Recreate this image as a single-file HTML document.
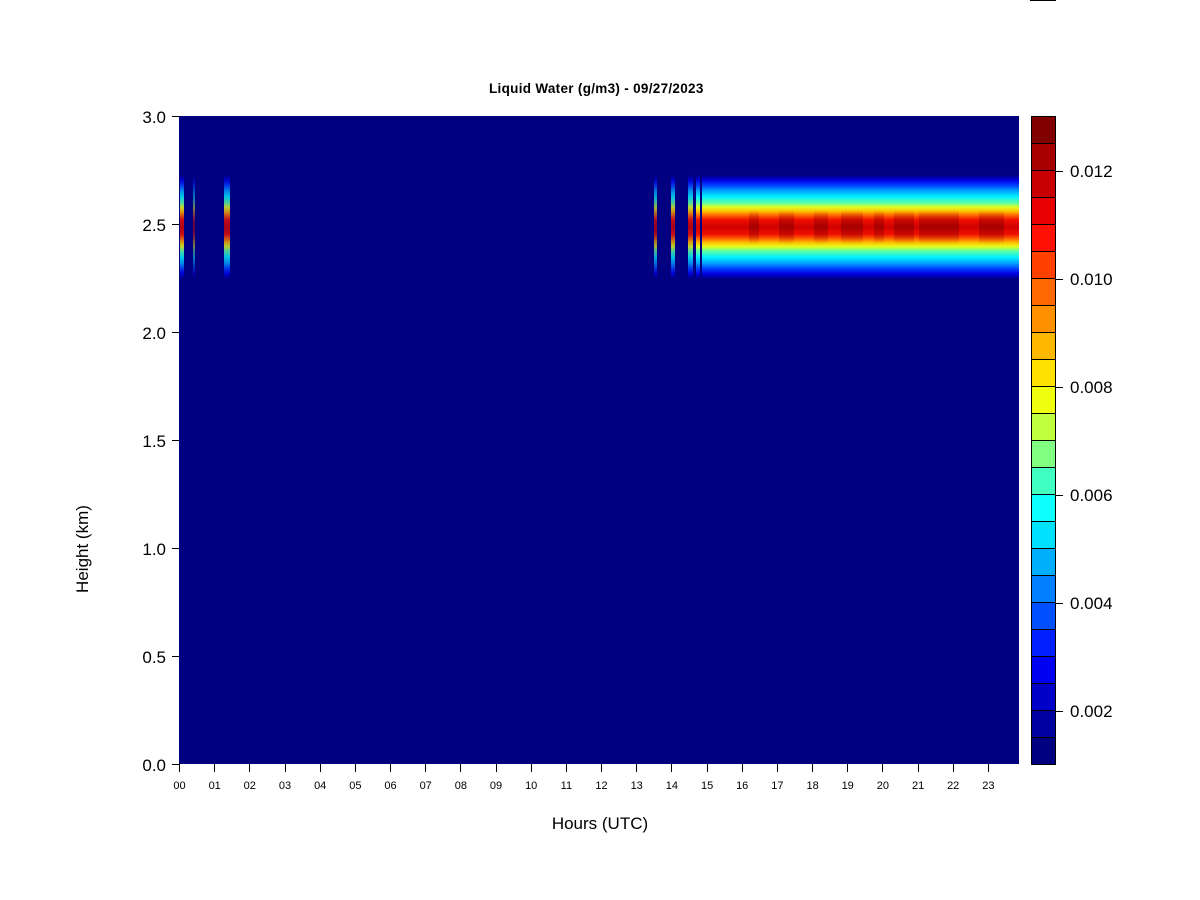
<!DOCTYPE html>
<html><head><meta charset="utf-8"><style>
*{margin:0;padding:0;box-sizing:border-box}
body{width:1200px;height:900px;background:#fff;position:relative;overflow:hidden;font-family:"Liberation Sans",Arial,sans-serif;color:#000}
.a{position:absolute}
.plot{left:179px;top:116px;width:840px;height:648px;background:#000080}
.band{position:absolute;top:59px;height:104px;background:linear-gradient(to bottom,#000080 0%,#0000e0 5%,#0040ff 10%,#00a0ff 15%,#00f0ff 21%,#60ffa0 27%,#e0ff20 31%,#ffc000 35%,#ff6000 39%,#f01000 43%,#d00000 50%,#f01000 57%,#ff6000 61%,#ffc000 65%,#e0ff20 69%,#60ffa0 73%,#00f0ff 79%,#00a0ff 85%,#0040ff 90%,#0000e0 95%,#000080 100%)}
.dk{position:absolute;top:94px;height:34px;background:linear-gradient(to bottom,rgba(160,0,0,0),rgba(150,0,0,.7) 50%,rgba(160,0,0,0))}
.yl{position:absolute;right:1034px;font-size:17px;line-height:17px}
.yt{position:absolute;left:172px;width:7px;height:1px;background:#000}
.xt{position:absolute;top:764px;width:1px;height:8px;background:#000}
.xl{position:absolute;top:780px;font-size:11px;width:30px;text-align:center;margin-left:-15px}
.cb{position:absolute;left:1031px;width:25px;height:28px;border:1px solid #000}
.ct{position:absolute;left:1055px;width:8px;height:1px;background:#000}
.cl{position:absolute;left:1070px;font-size:17px;line-height:17px}
</style></head><body>
<div class="a" style="left:1030px;top:0;width:26px;height:1px;background:#000"></div>
<div class="a" style="left:489px;top:81px;font-size:13.5px;font-weight:bold;white-space:nowrap;letter-spacing:0.3px">Liquid Water (g/m3) - 09/27/2023</div>
<div class="a plot">
  <div class="band" style="left:1px;width:4px;opacity:.85"></div>
  <div class="band" style="left:14px;width:2px;opacity:.5"></div>
  <div class="band" style="left:45px;width:6px;opacity:.8"></div>
  <div class="band" style="left:475px;width:3px;opacity:.7"></div>
  <div class="band" style="left:492px;width:4px;opacity:.8"></div>
  <div class="band" style="left:509px;width:5px;opacity:.85"></div>
  <div class="band" style="left:517px;width:4px"></div>
  <div class="band" style="left:523px;width:317px"></div>
  <div class="dk" style="left:570px;width:10px"></div>
  <div class="dk" style="left:600px;width:15px"></div>
  <div class="dk" style="left:635px;width:14px"></div>
  <div class="dk" style="left:662px;width:22px"></div>
  <div class="dk" style="left:695px;width:10px"></div>
  <div class="dk" style="left:715px;width:20px"></div>
  <div class="dk" style="left:740px;width:40px"></div>
  <div class="dk" style="left:800px;width:25px"></div>
</div>
<div class="yt" style="top:116px"></div><div class="yl" style="top:109px">3.0</div>
<div class="yt" style="top:224px"></div><div class="yl" style="top:217px">2.5</div>
<div class="yt" style="top:332px"></div><div class="yl" style="top:325px">2.0</div>
<div class="yt" style="top:440px"></div><div class="yl" style="top:433px">1.5</div>
<div class="yt" style="top:548px"></div><div class="yl" style="top:541px">1.0</div>
<div class="yt" style="top:656px"></div><div class="yl" style="top:649px">0.5</div>
<div class="yt" style="top:764px"></div><div class="yl" style="top:757px">0.0</div>
<div class="a" style="left:33px;top:539px;width:100px;text-align:center;font-size:17px;transform:rotate(-90deg)">Height (km)</div>
<div class="a" style="left:500px;top:814px;width:200px;text-align:center;font-size:17px">Hours (UTC)</div>
<div id="xt"></div>
<div id="cbar"></div>
<script>
var h='';for(var i=0;i<24;i++){var x=179+i*35.17;h+='<div class="xt" style="left:'+x.toFixed(1)+'px"></div><div class="xl" style="left:'+(x+0.5).toFixed(1)+'px">'+(i<10?'0'+i:i)+'</div>';}
document.getElementById('xt').innerHTML=h;
var c=['#000080','#0000a0','#0000c8','#0000f0','#0020ff','#0050ff','#0080ff','#00b0ff','#00e0ff','#10ffff','#40ffc0','#80ff80','#c0ff40','#f0ff10','#ffe000','#ffb800','#ff9000','#ff6800','#ff4000','#ff1000','#e80000','#c80000','#a80000','#800000'];
var g='';for(var j=0;j<24;j++){var t=764-27*(j+1);g+='<div class="cb" style="top:'+t+'px;background:'+c[j]+'"></div>';}
var L=[['0.002',711],['0.004',603],['0.006',495],['0.008',387],['0.010',279],['0.012',171]];
L.forEach(function(l){g+='<div class="ct" style="top:'+l[1]+'px"></div><div class="cl" style="top:'+(l[1]-8)+'px">'+l[0]+'</div>';});
document.getElementById('cbar').innerHTML=g;
</script>
</body></html>
